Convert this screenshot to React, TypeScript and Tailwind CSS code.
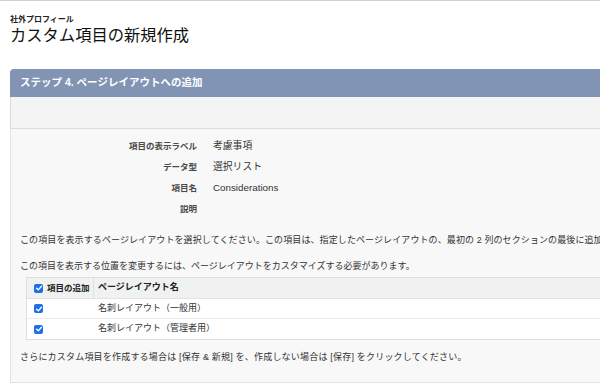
const jp = "font-['Liberation_Sans','Noto_Sans_CJK_JP',sans-serif]"

function Check() {
  return (
    <span className="inline-flex h-[9px] w-[9px] items-center justify-center rounded-[2px] bg-[#1d6fe8]">
      <svg viewBox="0 0 10 10" className="h-[8px] w-[8px]">
        <path d="M2 5.2 L4.2 7.3 L8 2.8" fill="none" stroke="white" strokeWidth="1.8" strokeLinecap="round" strokeLinejoin="round" />
      </svg>
    </span>
  )
}

const fields = [
  { label: '項目の表示ラベル', value: '考慮事項' },
  { label: 'データ型', value: '選択リスト' },
  { label: '項目名', value: 'Considerations' },
  { label: '説明', value: '' },
]

const layouts = ['名刺レイアウト（一般用）', '名刺レイアウト（管理者用）']

export default function App() {
  return (
    <div className={`w-[600px] h-[384px] overflow-hidden bg-white border-t border-[#cfcfcf] text-[#333] ${jp}`}>
      {/* Page title */}
      <div className="pl-[10px] pt-[14px]">
        <div className="text-[8px] font-bold leading-[10px] text-[#222]">社外プロフィール</div>
        <h1 className="text-[16.3px] leading-[20px] text-[#111]">カスタム項目の新規作成</h1>
      </div>

      {/* Step panel */}
      <div className="ml-[10px] mt-[24px] w-[820px]">
        <div className="flex h-[28px] items-center rounded-tl-[4px] bg-[#8294b3] px-[10px] text-[10.5px] font-bold text-white">
          ステップ 4. ページレイアウトへの追加
        </div>
        <div className="h-[32px] border-b border-l border-[#dcdcdc] bg-[#f4f4f4]" />

        <div className="border-b border-l border-[#e2e2e2] bg-[#f8f8f8] pb-[17px] pl-[9px] pt-[7px]">
          <div className="flex flex-col">
            {fields.map((f) => (
              <div key={f.label} className="flex h-[21px] items-center">
                <div className="w-[177px] text-right text-[8.5px] font-bold text-[#4a4a4a]">{f.label}</div>
                <div className="pl-[16px] text-[9.8px] text-[#333]">{f.value}</div>
              </div>
            ))}
          </div>

          <p className="mt-[12px] whitespace-nowrap text-[9px] leading-[16px] tracking-[0.1px]">
            この項目を表示するページレイアウトを選択してください。この項目は、指定したページレイアウトの、最初の 2 列のセクションの最後に追加されます。
          </p>
          <p className="mt-[10px] whitespace-nowrap text-[9px] leading-[16px]">
            この項目を表示する位置を変更するには、ページレイアウトをカスタマイズする必要があります。
          </p>

          {/* Layout table */}
          <div className="ml-[6px] mt-[3px] w-[760px] border border-[#dedede] text-[9px]">
            <div className="flex h-[21px] items-center border-b border-[#e2e2e2] bg-[#f0f1f1] font-bold text-[#222]">
              <div className="flex h-full w-[67px] items-center gap-[4px] border-r border-[#e0e0e0] pl-[7px] text-[8.5px]">
                <Check />
                項目の追加
              </div>
              <div className="pl-[4px]">ページレイアウト名</div>
            </div>
            {layouts.map((l, i) => (
              <div key={l} className={`flex h-[20px] items-center bg-white ${i === 0 ? 'border-b border-[#ececec]' : ''}`}>
                <div className="flex w-[67px] items-center pl-[7px]">
                  <Check />
                </div>
                <div className="pl-[4px]">{l}</div>
              </div>
            ))}
          </div>

          <p className="mt-[9px] whitespace-nowrap text-[9px] leading-[16px] tracking-[0.2px]">
            さらにカスタム項目を作成する場合は [保存 &amp; 新規] を、作成しない場合は [保存] をクリックしてください。
          </p>
        </div>
      </div>
    </div>
  )
}
